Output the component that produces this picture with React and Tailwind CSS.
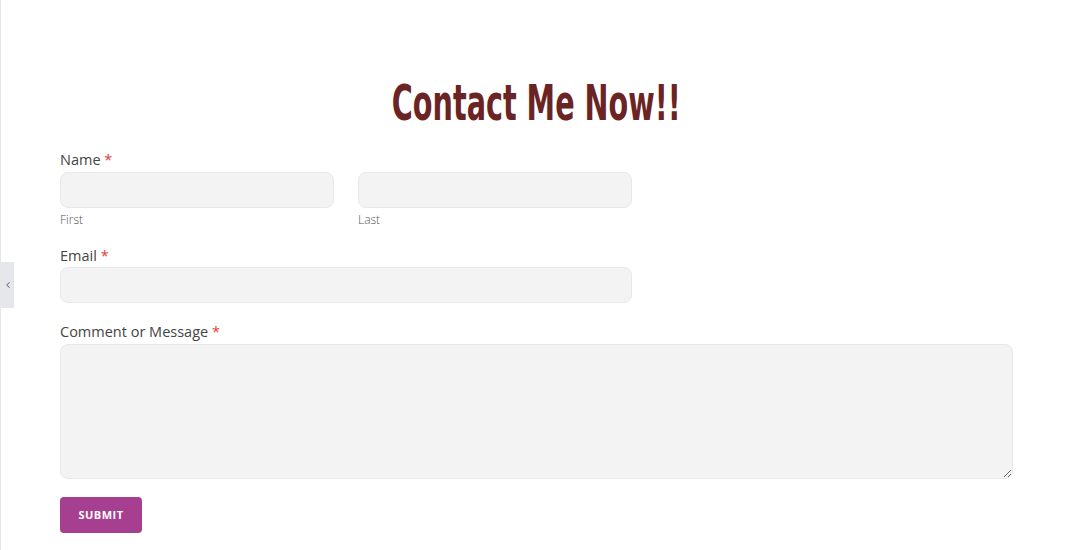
import React from "react";
import { ChevronLeft } from "lucide-react";

export default function App() {
  return (
    <div className="relative min-h-[550px] w-full bg-white border-l border-gray-200" style={{ fontFamily: '"Open Sans", "Noto Sans", sans-serif' }}>
      <div className="absolute left-0 top-[262px] w-[13px] h-[46px] bg-[#e5e7eb] flex items-center justify-center text-[#6b7280]">
        <ChevronLeft size={10} strokeWidth={2.5} />
      </div>
      <div className="pl-[59px] pr-[58px] pt-[78px]">
        <div className="flex justify-center">
          <h1 className="inline-block text-[#6b2424] text-[49px] leading-[52px] font-bold scale-x-[0.65] whitespace-nowrap" style={{ fontFamily: '"DejaVu Sans Condensed", "DejaVu Sans", sans-serif' }}>Contact Me Now!!</h1>
        </div>
        <div className="mt-[20px] text-[14.5px] text-[#444] leading-[20px]">
          Name <span className="text-[#e53935]">*</span>
        </div>
        <div className="mt-[2px] flex gap-[24px] w-[572px]">
          <div className="flex-1">
            <div className="h-[36px] rounded-[8px] bg-[#f3f3f3] border border-[#e8e8e8]"></div>
            <div className="mt-[4px] text-[12px] font-light text-[#555] leading-[16px]">First</div>
          </div>
          <div className="flex-1">
            <div className="h-[36px] rounded-[8px] bg-[#f3f3f3] border border-[#e8e8e8]"></div>
            <div className="mt-[4px] text-[12px] font-light text-[#555] leading-[16px]">Last</div>
          </div>
        </div>
        <div className="mt-[18px] text-[14.5px] text-[#444] leading-[20px]">
          Email <span className="text-[#e53935]">*</span>
        </div>
        <div className="mt-[1px] w-[572px] h-[36px] rounded-[8px] bg-[#f3f3f3] border border-[#e8e8e8]"></div>
        <div className="mt-[19px] text-[14.5px] text-[#444] leading-[20px]">
          Comment or Message <span className="text-[#e53935]">*</span>
        </div>
        <textarea className="mt-[2px] block w-[953px] h-[135px] rounded-[8px] bg-[#f3f3f3] border border-[#e8e8e8] resize" />
        <button className="mt-[18px] w-[82px] h-[36px] rounded-[4px] bg-[#a63f8f] text-white text-[11px] font-bold tracking-[0.5px]">SUBMIT</button>
      </div>
    </div>
  );
}
